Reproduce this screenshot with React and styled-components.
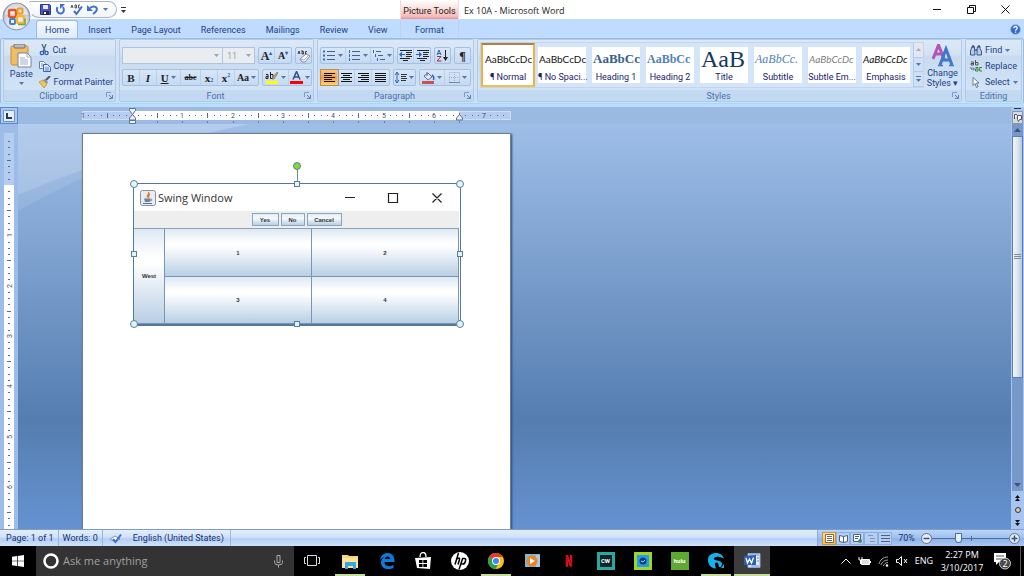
import React from 'react';
import styled, {createGlobalStyle, css} from "styled-components";
import {SiNetflix} from "react-icons/si";

const GlobalStyle = createGlobalStyle`
  * {
    box-sizing: border-box;
  }

  html, body, #root {
    height: 100%;
  }

  body {
    margin: 0;
    overflow: hidden;
    font-family: Roboto, "Open Sans", sans-serif;
    font-size: 9px;
    line-height: 12px;
    color: #1c3f88;
  }

  button, input, select {
    font: inherit;
    color: inherit;
    margin: 0;
    padding: 0;
    border: 0;
    background: none;
  }

  svg {
    display: block;
    flex: none;
  }
`

const Window = styled.div`
  height: 100vh;
  display: flex;
  flex-direction: column;
  background: #bfdbff;
`

/* ---------- title bar ---------- */

const TitleBar = styled.header`
  position: relative;
  display: flex;
  height: 19px;
  background: #fff;
  color: #222;
`

const OrbButton = styled.button`
  position: absolute;
  left: 2px;
  top: 2px;
  z-index: 2;
  width: 29px;
  height: 29px;
`

const TitleLeft = styled.div`
  flex: none;
  width: 400px;
  padding: 1px 0 0 28px;
  display: flex;
  align-items: flex-start;
`

const QuickAccess = styled.div`
  display: flex;
  align-items: center;
  justify-content: space-between;
  width: 89px;
  height: 17px;
  padding: 0 8px 0 11px;
  border: 1px solid #a9b4c4;
  border-left-color: #fff;
  border-radius: 3px 9px 9px 12px;
  background: linear-gradient(#fff, #f1f4f9);
`

const PlainButton = styled.button`
  display: flex;
  align-items: center;
  justify-content: center;
  min-width: ${p => p.$w || 10}px;
  height: ${p => p.$h || 15}px;
`

const PictureTools = styled.div`
  flex: none;
  width: 59px;
  padding-top: 5px;
  text-align: center;
  white-space: nowrap;
  background: linear-gradient(#fff, #fbe4e2 40%, #f5b9b5 88%, #e98f8c);
  border-left: 1px solid #f3dcdc;
  border-right: 1px solid #f3dcdc;
`

const Caption = styled.h1`
  flex: 1;
  margin: 0;
  padding: 5px 0 0 5px;
  font-family: "Open Sans", sans-serif;
  font-size: 9px;
  font-weight: 400;
`

const WindowButtons = styled.div`
  display: flex;
  padding-right: 2px;
`

/* ---------- tabs ---------- */

const TabRow = styled.nav`
  display: flex;
  align-items: flex-end;
  height: 19px;
  padding-right: 3px;
`

const TabList = styled.div`
  flex: none;
  width: 400px;
  padding-left: 36px;
  display: flex;
`

const Tab = styled.button`
  height: 18px;
  padding: 0 ${p => p.$active ? 8 : 9}px;
  white-space: nowrap;
  border: 1px solid transparent;
  border-bottom: 0;

  ${p => p.$active && css`
    background: linear-gradient(#f6faff, #dfebf8);
    border-color: #9dbbe0;
    border-radius: 3px 3px 0 0;
  `}
  ${p => p.$context && css`
    width: 59px;
    border-color: transparent #c6cfe6;
  `}
`

const TabFill = styled.div`
  flex: 1;
`

/* ---------- ribbon ---------- */

const Ribbon = styled.section`
  display: grid;
  grid-template-columns: 113px 195px 157px 1fr 57px;
  grid-template-rows: minmax(0, 1fr);
  gap: 3px;
  flex: none;
  height: 66px;
  padding: 0 1px 1px 2px;
  background: linear-gradient(#d5e4f5, #cbdff5);
  border: 1px solid #9cbce0;
  border-bottom-color: #9ce0f0;
  border-radius: 3px;
`

const Group = styled.div`
  display: flex;
  flex-direction: column;
  min-width: 0;
  border: 1px solid #b0cbe9;
  border-radius: 2px;
  background: linear-gradient(#dce8f6, #d2e2f4 25%, #c7daef 26%, #d5e6f8);
`

const GroupBody = styled.div`
  flex: 1;
  display: flex;
  min-height: 0;
  padding: ${p => p.$pad || "2px 2px 0 2px"};
`

const GroupLabel = styled.div`
  display: flex;
  align-items: center;
  flex: none;
  height: 11px;
  background: #c2d9f1;
  color: #4a70ad;

  span {
    flex: 1;
    text-align: center;
    padding-left: ${p => p.$bare ? 0 : 7}px;
  }
`

const Launcher = styled.button`
  width: 9px;
  height: 9px;
`

const BigButton = styled.button`
  display: flex;
  flex-direction: column;
  align-items: center;
  width: ${p => p.$w}px;
  padding-top: 2px;
  line-height: 10px;

  svg + span {
    margin-top: 1px;
  }

  span + svg {
    margin-top: 3px;
  }
`

const Lines = styled.div`
  display: flex;
  flex-direction: column;
`

const LineButton = styled.button`
  display: flex;
  align-items: center;
  gap: 3px;
  height: 16px;
  padding-left: 2px;
  white-space: nowrap;
`

const Rows = styled.div`
  display: flex;
  flex-direction: column;
  gap: 5px;
  width: 100%;
`

const Row = styled.div`
  display: flex;
  gap: 3px;
  height: 17px;
`

const ButtonSet = styled.div`
  display: flex;
  align-items: stretch;
  flex: none;
  border: 1px solid #a4c0e2;
  border-radius: 2px;
  background: linear-gradient(#d8e6f7, #c5daf2);
`

const Tool = styled.button`
  display: flex;
  align-items: center;
  justify-content: center;
  flex: none;
  width: ${p => p.$w || 17}px;
  color: #222;
  font-family: "Liberation Serif", serif;
  font-size: ${p => p.$size || 11}px;
  font-weight: 700;
  border-right: 1px solid #b9d0ec;

  &:last-child {
    border-right: 0;
  }

  svg + svg, span + svg {
    margin-left: 2px;
  }

  sub, sup {
    font-size: 6px;
    line-height: 6px;
    color: #2a5fb5;
  }

  sub {
    align-self: flex-end;
    padding-bottom: 2px;
  }

  sup {
    align-self: flex-start;
    padding-top: 2px;
  }

  ${p => p.$on && css`
    background: linear-gradient(#fbc67c, #fd9b3b 50%, #ffd36b);
    outline: 1px solid #b5905a;
  `}
`

const ComboPair = styled.div`
  display: flex;
  flex: none;
`

const Combo = styled.label`
  position: relative;
  display: flex;
  width: ${p => p.$w}px;
  border: 1px solid #b4c4d8;
  background: #e9edf1;
  color: #9aa3ae;

  & + & {
    border-left: 0;
  }

  select {
    appearance: none;
    width: 100%;
    padding-left: 4px;
    opacity: 1;
  }

  svg {
    position: absolute;
    right: 3px;
    top: 6px;
  }
`

const Gallery = styled.div`
  flex: 1;
  display: flex;
  min-width: 0;
  height: 46px;
  overflow: hidden;
  border: 1px solid #c0d5ee;
  background: #d4e5f9;
`

const StyleTile = styled.button`
  flex: none;
  width: 54px;
  height: 44px;
  padding: 2px 1px;
  border: 2px solid transparent;
  color: #20206a;
  ${p => p.$on && css`
    border-color: #b08040 #f0b040 #f5c04a;
    background: #fff;
  `}
`

const TileFace = styled.span`
  display: flex;
  flex-direction: column;
  width: 48px;
  height: 36px;
  background: #fff;
  white-space: nowrap;
  text-align: center;
`

const Sample = styled.span`
  display: block;
  height: 24px;
  line-height: 24px;
  padding-left: 1px;
  overflow: hidden;
  text-align: left;
  font-family: ${p => p.$serif ? '"Liberation Serif", serif' : 'Lato, sans-serif'};
  font-size: ${p => p.$size || 10}px;
  font-weight: ${p => p.$bold ? 700 : 400};
  font-style: ${p => p.$italic ? "italic" : "normal"};
  color: ${p => p.$color || "#111"};
`

const GalleryScroll = styled.div`
  display: grid;
  grid-template-rows: repeat(3, 1fr);
  width: 11px;
  margin-left: auto;
  border-left: 1px solid #b3cbe8;

  button {
    display: flex;
    align-items: center;
    justify-content: center;
    border-bottom: 1px solid #b3cbe8;
    background: #cfe0f5;
  }

  button:first-child {
    background: #e4e8ee;
  }
`

/* ---------- document area ---------- */

const Work = styled.main`
  flex: 1;
  display: flex;
  min-height: 0;
  margin-top: 3px;
  background: #9bbae1;
`

const WorkMain = styled.div`
  flex: 1;
  display: flex;
  flex-direction: column;
  min-width: 0;
`

const RulerRow = styled.div`
  display: flex;
  height: 17px;
`

const TabStop = styled.button`
  display: flex;
  align-items: center;
  justify-content: center;
  width: 18px;
  margin-right: 62px;
  border: 1px solid #5c88cc;
  background: #a9c6ef;
`

const DocRow = styled.div`
  flex: 1;
  display: flex;
  min-height: 0;
`

const SideRuler = styled.div`
  display: flex;
  width: 18px;
  padding: 9px 4px 0 4px;
  overflow: hidden;
  background: #9dbde8;
`

const SideScale = styled.div`
  background: #fff;
`

const Canvas = styled.div`
  position: relative;
  flex: 1;
  display: flex;
  padding: 9px 0 0 64px;
  overflow: hidden;
  background: linear-gradient(#9ebee8, #557db0 73%, #6592d0);
`

const Swoosh = styled.svg`
  position: absolute;
  left: 0;
  top: 0;
`

const Page = styled.article`
  position: relative;
  width: 429px;
  padding: 49px 49px 0 50px;
  background: #fff;
  border: 1px solid #6d7d96;
  border-bottom: 0;
  box-shadow: 1px 1px 2px #2f4a74;
`

const Picture = styled.figure`
  position: relative;
  margin: 0;
  border: 1px solid #54799f;
  border-width: 1px 1px 2px 1px;
  padding-right: 1px;
  font-family: "Liberation Sans", sans-serif;
  color: #333;
`

const Handle = styled.i`
  position: absolute;
  left: ${p => p.$x};
  top: ${p => p.$y};
  width: ${p => p.$round ? 8 : 6}px;
  height: ${p => p.$round ? 8 : 6}px;
  transform: translate(-50%, -50%);
  border: 1px solid #5c7f99;
  border-radius: ${p => p.$round ? "50%" : "0"};
  background: ${p => p.$green ? "#7fdc2c" : "#dff5f8"};
`

const RotateStem = styled.i`
  position: absolute;
  left: 50%;
  top: -18px;
  width: 1px;
  height: 18px;
  background: #6a8db0;
`

const SwingTitle = styled.div`
  display: flex;
  align-items: center;
  height: 27px;
  padding: 0 0 0 6px;
  gap: 2px;
  font-family: "Open Sans", sans-serif;
  font-size: 11px;
  line-height: 16px;

  span {
    flex: 1;
  }
`

const SwingBar = styled.div`
  display: flex;
  justify-content: center;
  gap: 2px;
  height: 17px;
  padding: 2px 0;
  background: #eee;
`

const swingFace = css`
  font-weight: 700;
  font-size: 6px;
  line-height: 8px;
  border: 1px solid #7b95b0;
  background: linear-gradient(#dde8f3, #fff 30%, #fff 36%, #b8cfe5);
`

const SwingButton = styled.button`
  ${swingFace};
  width: ${p => p.$w}px;
  height: 13px;
  background: linear-gradient(#e3ecf5, #f5f9fc 40%, #b8cfe5);
  border-color: #8ba3bb;
`

const SwingBody = styled.div`
  display: grid;
  grid-template-columns: 31px 1fr 1fr;
  grid-template-rows: 48px 47px;
  border-top: 1px solid #8ba0b4;
`

const SwingCell = styled.button`
  ${swingFace};
  border-width: 0 1px 1px 0;
  grid-row: ${p => p.$tall ? "span 2" : "auto"};
`

const ScrollColumn = styled.div`
  display: flex;
  flex-direction: column;
  align-items: center;
  width: 13px;
  background: #a8c5f2;
`

const SplitBar = styled.div`
  width: 7px;
  height: 1px;
  margin: 1px 0 2px;
  background: #25365a;
`

const ScrollTrack = styled.div`
  flex: 1;
  display: flex;
  flex-direction: column;
  align-items: center;
  width: 11px;
  background: #7799ca;
`

const ScrollThumb = styled.div`
  display: flex;
  align-items: center;
  justify-content: center;
  height: 66%;
  width: 11px;
  margin-bottom: auto;
  border: 1px solid #5d7fb0;
  background: linear-gradient(90deg, #f1f5f9, #dce5ee 50%, #b6c8dc);
`

/* ---------- status bar ---------- */

const StatusBar = styled.footer`
  display: flex;
  flex: none;
  height: 17px;
  color: #15306c;
  border-top: 1px solid #7e9cc4;
  background: linear-gradient(#e3eefc, #cfe1fa 45%, #b3cff5 55%, #cfe2fb);
`

const StatusItem = styled.div`
  display: flex;
  align-items: center;
  padding: 0 ${p => p.$tight ? 4 : 6}px;
  gap: 11px;
  border-right: 1px solid #9ab6dd;

  &:first-child {
    padding-right: 4px;
  }
`

const StatusRight = styled.div`
  display: flex;
  align-items: center;
  margin-left: auto;
  padding: 0 4px;
  border-left: 1px solid #8aa9d5;
  background: linear-gradient(#bcd5f8, #9dbfee 50%, #8db3e8 55%, #a9c9f3);
`

const ViewButton = styled.button`
  display: flex;
  align-items: center;
  justify-content: center;
  width: 14px;
  height: 13px;
  border: 1px solid ${p => p.$on ? "#c9953c" : "#8dafe0"};
  background: ${p => p.$on ? "linear-gradient(#ffdf9a, #fdb750)" : "#b4cff3"};
`

const ZoomValue = styled.button`
  width: 29px;
`

const ZoomSlider = styled.input`
  appearance: none;
  width: 77px;
  height: 12px;
  background: linear-gradient(#4d6b9c, #4d6b9c) 0 6px / 100% 1px no-repeat,
  linear-gradient(#4d6b9c, #4d6b9c) 39px 4px / 1px 5px no-repeat;

  &::-webkit-slider-thumb {
    appearance: none;
    width: 7px;
    height: 10px;
    border: 1px solid #4d6b9c;
    border-radius: 1px 1px 4px 4px;
    background: #e8f0fb;
  }
`

/* ---------- taskbar ---------- */

const Taskbar = styled.footer`
  display: flex;
  flex: none;
  align-items: stretch;
  height: 30px;
  background: #000;
  color: #fff;
`

const StartButton = styled.button`
  display: flex;
  align-items: center;
  justify-content: center;
  width: 36px;
`

const SearchBox = styled.label`
  display: flex;
  align-items: center;
  gap: 4px;
  width: 258px;
  padding: 0 10px 0 7px;
  background: #333;

  input {
    flex: 1;
    min-width: 0;
    height: 18px;
    font-family: "Open Sans", sans-serif;
    font-size: 11px;
    line-height: 18px;
    outline: 0;
  }

  input::placeholder {
    color: #a0a0a0;
    opacity: 1;
  }
`

const AppButton = styled.button`
  display: flex;
  align-items: center;
  justify-content: center;
  width: ${p => p.$w || 37}px;
  background: ${p => p.$active ? "#3c3c3c" : "none"};
  border-bottom: 2px solid ${p => p.$open ? "#c5dd9c" : "transparent"};
  border-top: 2px solid transparent;
  margin: 0 ${p => p.$open && !p.$active ? 3 : 0}px;
`

const Apps = styled.div`
  display: flex;
  padding-left: 3px;
`

const SquareLogo = styled.span`
  display: flex;
  align-items: center;
  justify-content: center;
  width: 18px;
  height: 18px;
  background: ${p => p.$bg};
  border: ${p => p.$border || "0"};
  color: #fff;
  font-size: 6px;
  line-height: 8px;
  font-weight: 700;
`

const Tray = styled.div`
  display: flex;
  align-items: center;
  gap: 7px;
  margin-left: auto;
  padding-right: 3px;
  font-family: "Open Sans", sans-serif;
`

const Clock = styled.div`
  width: 44px;
  margin-right: 2px;
  text-align: center;
  line-height: 13px;
`

const ShowDesktop = styled.button`
  width: 1px;
  height: 30px;
  background: #555;
`

/* ---------- icons ---------- */

const Svg = ({w = 12, h = 12, vb, children}) => (
    <svg width={w} height={h} viewBox={vb || `0 0 ${w} ${h}`} fill="none" aria-hidden="true">{children}</svg>
)

const Caret = ({color = "#5578ab"}) => (
    <Svg w={5} h={3}><path d="M0 0h5L2.5 3z" fill={color}/></Svg>
)

const Orb = () => (
    <Svg w={29} h={29}>
        <defs>
            <radialGradient id="orb" cx=".5" cy=".75" r=".8">
                <stop offset="0" stopColor="#fff"/>
                <stop offset=".5" stopColor="#d5dae2"/>
                <stop offset="1" stopColor="#7f8ea6"/>
            </radialGradient>
        </defs>
        <circle cx="14.5" cy="14.5" r="13.5" fill="url(#orb)" stroke="#8795ab"/>
        <path d="M3 13a11.500 11.500 0 0 1 23 0q-11-4-23 0z" fill="#fff" opacity=".6"/>
        <rect x="7" y="8" width="7" height="7" rx="1.500" stroke="#e4572a" strokeWidth="2.400"/>
        <rect x="15.500" y="6.500" width="5" height="5" rx="1" stroke="#f39a1d" strokeWidth="2"/>
        <rect x="8" y="17" width="5" height="5" rx="1" stroke="#3f81cf" strokeWidth="2"/>
        <rect x="15" y="14" width="7" height="7" rx="1.500" stroke="#f6b62a" strokeWidth="2.400"/>
        <path d="M16 22.500h7v-6" stroke="#6aa84f" strokeWidth="1.500"/>
    </Svg>
)

const SaveIcon = () => (
    <Svg w={11} h={11}>
        <path d="M.5.500h9l1 1v9H.5z" fill="#4d55c4" stroke="#2d3592"/>
        <path d="M3 1h5v4H3z" fill="#e8ecfa"/>
        <path d="M3 7h6v4H3z" fill="#1f2760"/>
        <path d="M4 8h2v2H4z" fill="#fff"/>
    </Svg>
)

const RedoIcon = () => (
    <Svg w={11} h={11}>
        <path d="M2.500 3C.8 6 2.500 9.500 5.500 9.500S10 6 8 3" stroke="#3c6fd0" strokeWidth="2"/>
        <path d="M5 5V0h5z" fill="#3c6fd0"/>
    </Svg>
)

const SpellIcon = ({flat}) => (
    <Svg w={13} h={12}>
        {flat
            ? <path d="M1 7l5-3 5 3-5 3z" fill="#fff" stroke="#7f92b2"/>
            : <path d="M1 4l1-3 1 3M5 1v3h1.500V1zM10 1H8.500v3H10" stroke="#333" strokeWidth=".8"/>}
        <path d="M4 7l2.500 3L12 2.500" stroke="#3c6fd0" strokeWidth="2"/>
    </Svg>
)

const UndoIcon = () => (
    <Svg w={12} h={11}>
        <path d="M3 4c4-3 8-1 6.500 2.500C9 8 7.500 9 6 10" stroke="#3c6fd0" strokeWidth="2"/>
        <path d="M0 1v6h6z" fill="#3c6fd0"/>
    </Svg>
)

const HelpIcon = () => (
    <Svg w={11} h={11}>
        <circle cx="5.500" cy="5.500" r="5" fill="#2f6bd0" stroke="#a9bcd8"/>
        <path d="M3.800 4.300c0-2.500 3.500-2.200 3.500-.2 0 1.200-1.700 1.200-1.700 2.600M5.600 7.600v1.200" stroke="#fff" strokeWidth="1.300"/>
    </Svg>
)

const PasteIcon = () => (
    <Svg w={22} h={24}>
        <rect x="1" y="2" width="17" height="19" rx="1.500" fill="#f1bd62" stroke="#c98c35"/>
        <rect x="4" y="0" width="11" height="4" rx="1" fill="#b9bcc4" stroke="#77716a"/>
        <path d="M8 9h9l4 4v10H8z" fill="#fff" stroke="#7184aa"/>
        <path d="M17 9v4h4M10 14h5M10 16h8M10 18h8M10 20h8" stroke="#9fb0cf"/>
    </Svg>
)

const CutIcon = () => (
    <Svg w={11} h={12}>
        <path d="M3 0l3.500 8M7 0L4 8" stroke="#52647f" strokeWidth="1.300"/>
        <circle cx="3" cy="9" r="1.700" stroke="#2f62b8" strokeWidth="1.300"/>
        <circle cx="7.500" cy="9" r="1.700" stroke="#2f62b8" strokeWidth="1.300"/>
    </Svg>
)

const CopyIcon = () => (
    <Svg w={12} h={11}>
        <path d="M.5.500h4l2 2v5h-6z" fill="#fff" stroke="#5a7fc0"/>
        <path d="M4.500 3.500h4l3 3v4h-7z" fill="#d9e7fb" stroke="#3d62b0"/>
        <path d="M6 7h4M6 9h4M2 3h2M2 5h2" stroke="#5a7fc0"/>
    </Svg>
)

const BrushIcon = () => (
    <Svg w={12} h={12}>
        <path d="M0 6l4-2 4 4-3 4z" fill="#f0c557" stroke="#b28a2a" strokeWidth=".7"/>
        <path d="M4 4l2-1 3 3-1 2z" fill="#8b93a5"/>
        <path d="M7 4l4-4" stroke="#4d5a76" strokeWidth="2"/>
    </Svg>
)

const LauncherIcon = () => (
    <Svg w={7} h={7}>
        <path d="M.5 5V.500H5" stroke="#7f9cc6"/>
        <path d="M3 3l3 3M6.500 3v3.500H3" stroke="#5f7fae"/>
    </Svg>
)

const EraserIcon = () => (
    <Svg w={14} h={14}>
        <path d="M1 5l1-3 1 3M5 1v4h1.500V2.500H5M10 2.500H8.500V5H10" stroke="#333" strokeWidth=".9"/>
        <path d="M3 10l6-5 4 2-5 6H5z" fill="#fff" stroke="#7a87a5"/>
        <path d="M3 10l4 1 5-5" stroke="#9aa5bf"/>
    </Svg>
)

// bullets / numbering / multilevel share the same three lines
const ListIcon = ({kind}) => (
    <Svg w={13} h={12}>
        {[1.500, 5.500, 9.500].map((y, i) => {
            const dx = kind === "multi" ? i * 2 : 0;
            return (
                <g key={y}>
                    {kind === "bullet"
                        ? <rect x="0" y={y - 1} width="2" height="2" fill="#3d68b8"/>
                        : <path d={`M${1.500 + dx} ${y - 1.500}v3`} stroke="#3d68b8"/>}
                    <path d={`M${4 + dx} ${y}h${kind === "multi" ? 5 : 8}`} stroke="#41618f"/>
                </g>
            )
        })}
    </Svg>
)

const IndentIcon = ({out}) => (
    <Svg w={13} h={11}>
        <path d="M1 .5h12M7 2.500h6M7 4.500h5M7 6.500h6M1 8.500h10M4 10.500h5" stroke="#222"/>
        <path d={out ? "M0 4.500l3-3v6zM3 4h3v1H3z" : "M6 4.500l-3-3v6zM0 4h3v1H0z"} fill="#2f62b8"/>
    </Svg>
)

const SortIcon = () => (
    <Svg w={13} h={13}>
        <path d="M1 6l2-5 2 5M1.500 4.500h3" stroke="#2f62b8"/>
        <path d="M1 7.500h4L1 12h4.500" stroke="#a1304a"/>
        <path d="M9.500 1v9" stroke="#222"/>
        <path d="M7 8h5l-2.500 4z" fill="#222"/>
    </Svg>
)

const alignWidths = {
    left: [[0, 11], [0, 8], [0, 11], [0, 8], [0, 11]],
    center: [[0, 11], [2, 7], [0, 11], [2, 7], [0, 11]],
    right: [[0, 11], [3, 8], [0, 11], [3, 8], [0, 11]],
    justify: [[0, 11], [0, 11], [0, 11], [0, 11], [0, 11]],
}

const AlignIcon = ({kind}) => (
    <Svg w={11} h={9}>
        <path d={alignWidths[kind].map(([x, w], i) => `M${x} ${i * 2 + .5}h${w}`).join("")} stroke="#111"/>
    </Svg>
)

const SpacingIcon = () => (
    <Svg w={12} h={13}>
        <path d="M2 2v9M0 4l2-3 2 3M0 9l2 3 2-3" stroke="#2f62b8"/>
        <path d="M6 3.500h6M6 5.500h5M6 7.500h6M6 9.500h5" stroke="#333"/>
    </Svg>
)

const BucketIcon = () => (
    <Svg w={13} h={13}>
        <path d="M2 5l4-3 4 4-4 3z" fill="#dfe8f6" stroke="#5b6f94"/>
        <path d="M5 5V1" stroke="#5b6f94"/>
        <path d="M10 4c2 1 2 3 1.500 5" stroke="#2f62b8" strokeWidth="1.500"/>
        <path d="M0 10h12v3H0z" fill="#c8504f"/>
    </Svg>
)

const BorderIcon = () => (
    <Svg w={11} h={11}>
        <path d="M.5.500h10v10H.5zM5.500 0v10M0 5.500h10" stroke="#9fb0ca" strokeDasharray="1 1"/>
        <path d="M0 10.500h11" stroke="#7388aa"/>
    </Svg>
)

const HighlightIcon = () => (
    <Svg w={14} h={13}>
        <path d="M1 3.500h2v4H1v-2h2M5.500 1v6.500H8v-4H5.500" stroke="#222"/>
        <path d="M7 8l5-7 1 1-4 6z" fill="#d5b34a" stroke="#6b6f7d" strokeWidth=".7"/>
        <path d="M1 10h12v3H1z" fill="#ff0"/>
    </Svg>
)

const ChangeStylesIcon = () => (
    <Svg w={22} h={23}>
        <path d="M1 15L6.500 1 12 15M3 10h7" stroke="#b455b4" strokeWidth="3"/>
        <path d="M8 21l6-16 6 16M10 16h8" stroke="#3f78c8" strokeWidth="3"/>
        <path d="M6 21.500h5M17 21.500h5" stroke="#3f78c8" strokeWidth="1.500"/>
    </Svg>
)

const FindIcon = () => (
    <Svg w={12} h={11}>
        <path d="M2 1.500h2.500v3L5 10H.5V6zM7.500 1.500H10V4l1.500 2v4H7V4.500z" fill="#b9cbe6" stroke="#3a5890"/>
        <path d="M4.500 5h3M3 0v3M9 0v3" stroke="#3a5890" strokeWidth="1.500"/>
    </Svg>
)

const ReplaceIcon = () => (
    <Svg w={12} h={12}>
        <path d="M1 2h2.500v3H1V3.500h2M5.500 0v5H8V2.500H5.500" stroke="#555"/>
        <path d="M1 7v2h3M3 7.500L4.500 9 3 10.500" stroke="#3a5890" strokeWidth=".8"/>
        <path d="M5.500 7.500H8V11H5.500V9h2M12 7.500H9.700V11H12" stroke="#2e8b3a"/>
    </Svg>
)

const CursorIcon = () => (
    <Svg w={12} h={11}>
        <path d="M3 .5v8l2-2 1.500 4 1.500-.7L6.500 6H9z" fill="#fff" stroke="#4d5e80" strokeWidth=".8"/>
    </Svg>
)

const JavaIcon = () => (
    <Svg w={16} h={16}>
        <rect x=".5" y=".5" width="15" height="15" rx="2" fill="#e9edf1" stroke="#8293a4"/>
        <path d="M8.500 2C10 4 6 5 7.500 7.500M10 4C8 5.500 9 6 8.500 8" stroke="#e8742c" strokeWidth="1.300"/>
        <path d="M4 8.500h6.500l-1 3.500H5z" fill="#6d8397"/>
        <path d="M10.500 9c2 0 1.500 2-.5 2M3 13.500h9" stroke="#5a7187"/>
    </Svg>
)

const RoundSign = ({plus}) => (
    <Svg w={11} h={11}>
        <circle cx="5.500" cy="5.500" r="5" fill="#e4edf9" stroke="#5f7193"/>
        <path d={plus ? "M2.500 5.500h6M5.500 2.500v6" : "M2.500 5.500h6"} stroke="#3d4f75" strokeWidth="1.500"/>
    </Svg>
)

/* tick positions are computed, one inch is a bit over 50px at 70% zoom */
const INCH = 50.3;

const ticks = (zero, from, to) => {
    const out = [];
    for (let i = Math.ceil((from - zero) / INCH * 8); zero + i * INCH / 8 < to; i++) {
        out.push({i, pos: Math.round(zero + i * INCH / 8)});
    }
    return out;
}

const HorizontalRuler = () => (
    <Svg w={434} h={17}>
        <path d="M2.500 4.500h428v8h-428z" fill="#b4cdf0" stroke="#cfe0f6"/>
        <path d="M52 4h327v9H52z" fill="#fff"/>
        <text x="3" y="11" fontSize="7" textAnchor="middle" fill="#44506a">1</text>
        {ticks(52, 5, 428).map(({i, pos}) => {
            if (i % 8 === 0) {
                return i !== 0 &&
                    <text key={i} x={pos} y="11" fontSize="7" textAnchor="middle" fill="#44506a">{i / 8}</text>
            }
            return <path key={i} d={i % 4 === 0 ? `M${pos + .5} 6v5` : `M${pos + .5} 8v1`} stroke="#5e6b86"/>
        })}
        {ticks(52, 60, 380).filter(t => t.i % 4 === 0).map(({i, pos}) => (
            <path key={i} d={`M${pos + .5} 14v2`} stroke="#6b7fa4"/>
        ))}
        <path d="M49.500 1.500h6v2l-3 4-3-4zM49.500 13v-2l3-3.500 3 3.500v2zM49.500 13.500h6v3h-6z" fill="#e9f0fa" stroke="#5f7396"/>
        <path d="M376.500 13v-2l3-3.500 3 3.500v2z" fill="#e9f0fa" stroke="#5f7396"/>
    </Svg>
)

const VerticalRuler = () => (
    <Svg w={10} h={396}>
        <path d="M0 0h10v52H0z" fill="#b4cdf0"/>
        {ticks(52, 4, 394).map(({i, pos}) => {
            if (i % 8 === 0) {
                return i !== 0 && (
                    <text key={i} x="0" y="0" transform={`translate(8 ${pos}) rotate(-90)`} fontSize="7"
                          textAnchor="middle" fill="#44506a">{Math.abs(i / 8)}</text>
                )
            }
            return <path key={i} d={i % 4 === 0 ? `M3 ${pos + .5}h4` : `M4 ${pos + .5}h2`} stroke="#5e6b86"/>
        })}
    </Svg>
)

/* ---------- data ---------- */

const tabs = ["Home", "Insert", "Page Layout", "References", "Mailings", "Review", "View"]

const textStyles = [
    {name: "¶ Normal", text: "AaBbCcDc"},
    {name: "¶ No Spaci...", text: "AaBbCcDc"},
    {name: "Heading 1", text: "AaBbCc", serif: true, bold: true, size: 13, color: "#365f91"},
    {name: "Heading 2", text: "AaBbCc", serif: true, bold: true, size: 12, color: "#4f81bd"},
    {name: "Title", text: "AaB", serif: true, size: 24, color: "#17365d"},
    {name: "Subtitle", text: "AaBbCc.", serif: true, italic: true, size: 12, color: "#4f81bd"},
    {name: "Subtle Em...", text: "AaBbCcDc", italic: true, color: "#808080"},
    {name: "Emphasis", text: "AaBbCcDc", italic: true},
]

const Label = ({children, bare}) => (
    <GroupLabel $bare={bare}>
        <span>{children}</span>
        {!bare && <Launcher aria-label={`${children} options`}><LauncherIcon/></Launcher>}
    </GroupLabel>
)

const TitleArea = () => (
    <>
        <TitleBar>
            <OrbButton aria-label="Office Button"><Orb/></OrbButton>
            <TitleLeft>
                <QuickAccess>
                    <PlainButton aria-label="Save"><SaveIcon/></PlainButton>
                    <PlainButton aria-label="Repeat"><RedoIcon/></PlainButton>
                    <PlainButton aria-label="Spelling"><SpellIcon/></PlainButton>
                    <PlainButton aria-label="Undo"><UndoIcon/></PlainButton>
                    <PlainButton $w={5} aria-label="Undo list"><Caret/></PlainButton>
                </QuickAccess>
                <PlainButton $w={13} $h={17} aria-label="Customize">
                    <Svg w={5} h={6}><path d="M0 .5h5" stroke="#333"/><path d="M0 3h5L2.500 6z" fill="#333"/></Svg>
                </PlainButton>
            </TitleLeft>
            <PictureTools>Picture Tools</PictureTools>
            <Caption>Ex 10A - Microsoft Word</Caption>
            <WindowButtons>
                <PlainButton $w={34} $h={19} aria-label="Minimize">
                    <Svg w={9} h={9}><path d="M0 4.500h8" stroke="#111"/></Svg>
                </PlainButton>
                <PlainButton $w={34} $h={19} aria-label="Restore">
                    <Svg w={9} h={9}><path d="M.5 2.500h6v6h-6zM2.500 2V.500h6v6H7" stroke="#111"/></Svg>
                </PlainButton>
                <PlainButton $w={34} $h={19} aria-label="Close">
                    <Svg w={9} h={9}><path d="M.5.500l8 8M8.500.500l-8 8" stroke="#111"/></Svg>
                </PlainButton>
            </WindowButtons>
        </TitleBar>
        <TabRow>
            <TabList>
                {tabs.map((t, i) => <Tab key={t} $active={i === 0}>{t}</Tab>)}
            </TabList>
            <Tab $context>Format</Tab>
            <TabFill/>
            <PlainButton $w={11} $h={18} aria-label="Help"><HelpIcon/></PlainButton>
        </TabRow>
    </>
)

const RibbonArea = () => (
    <Ribbon>
        <Group>
            <GroupBody>
                <BigButton $w={33}><PasteIcon/><span>Paste</span><Caret/></BigButton>
                <Lines>
                    <LineButton><CutIcon/>Cut</LineButton>
                    <LineButton><CopyIcon/>Copy</LineButton>
                    <LineButton><BrushIcon/>Format Painter</LineButton>
                </Lines>
            </GroupBody>
            <Label>Clipboard</Label>
        </Group>
        <Group>
            <GroupBody $pad="7px 1px 0 2px">
                <Rows>
                    <Row>
                        <ComboPair>
                            <Combo $w={101}>
                                <select aria-label="Font" disabled defaultValue="">
                                    <option value=""/>
                                </select>
                                <Caret color="#9aa3ae"/>
                            </Combo>
                            <Combo $w={32}>
                                <select aria-label="Font size" disabled>
                                    <option>11</option>
                                </select>
                                <Caret color="#9aa3ae"/>
                            </Combo>
                        </ComboPair>
                        <ButtonSet>
                            <Tool $w={16} $size={12} aria-label="Grow font">A<sup>▴</sup></Tool>
                            <Tool $w={16} $size={10} aria-label="Shrink font">A<sup>▾</sup></Tool>
                        </ButtonSet>
                        <ButtonSet><Tool $w={15} aria-label="Clear formatting"><EraserIcon/></Tool></ButtonSet>
                    </Row>
                    <Row>
                        <ButtonSet>
                            <Tool>B</Tool>
                            <Tool><i>I</i></Tool>
                            <Tool $w={24}><u>U</u>&nbsp;<Caret/></Tool>
                            <Tool $w={20} $size={8}><s>abc</s></Tool>
                            <Tool>x<sub>2</sub></Tool>
                            <Tool>x<sup>2</sup></Tool>
                            <Tool $w={23} $size={10}><span>Aa</span><Caret/></Tool>
                        </ButtonSet>
                        <ButtonSet>
                            <Tool $w={26} aria-label="Highlight"><HighlightIcon/><Caret/></Tool>
                            <Tool $w={22} aria-label="Font color">
                                <Svg w={13} h={13}>
                                    <path d="M3 8.500L6.500.500l3.500 8M4.500 6h4" stroke="#2b4f8f" strokeWidth="1.500"/>
                                    <path d="M0 10h13v3H0z" fill="red"/>
                                </Svg>
                                <Caret/>
                            </Tool>
                        </ButtonSet>
                    </Row>
                </Rows>
            </GroupBody>
            <Label>Font</Label>
        </Group>
        <Group>
            <GroupBody $pad="7px 1px 0 2px">
                <Rows>
                    <Row>
                        <ButtonSet>
                            <Tool $w={25} aria-label="Bullets"><ListIcon kind="bullet"/><Caret/></Tool>
                            <Tool $w={25} aria-label="Numbering"><ListIcon kind="number"/><Caret/></Tool>
                            <Tool $w={22} aria-label="Multilevel list"><ListIcon kind="multi"/><Caret/></Tool>
                        </ButtonSet>
                        <ButtonSet>
                            <Tool $w={16} aria-label="Decrease indent"><IndentIcon out/></Tool>
                            <Tool $w={16} aria-label="Increase indent"><IndentIcon/></Tool>
                        </ButtonSet>
                        <ButtonSet><Tool $w={15} aria-label="Sort"><SortIcon/></Tool></ButtonSet>
                        <ButtonSet><Tool $w={15} $size={12}>¶</Tool></ButtonSet>
                    </Row>
                    <Row>
                        <ButtonSet>
                            {Object.keys(alignWidths).map((k, i) => (
                                <Tool key={k} $on={i === 0} aria-label={`Align ${k}`}><AlignIcon kind={k}/></Tool>
                            ))}
                        </ButtonSet>
                        <ButtonSet><Tool $w={21} aria-label="Line spacing"><SpacingIcon/><Caret/></Tool></ButtonSet>
                        <ButtonSet>
                            <Tool $w={25} aria-label="Shading"><BucketIcon/><Caret/></Tool>
                            <Tool $w={25} aria-label="Borders"><BorderIcon/><Caret/></Tool>
                        </ButtonSet>
                    </Row>
                </Rows>
            </GroupBody>
            <Label>Paragraph</Label>
        </Group>
        <Group>
            <GroupBody $pad="2px 0 0 2px">
                <Gallery>
                    {textStyles.map((s, i) => (
                        <StyleTile key={s.name} $on={i === 0}>
                            <TileFace>
                                <Sample $serif={s.serif} $bold={s.bold} $italic={s.italic} $size={s.size}
                                        $color={s.color}>{s.text}</Sample>
                                {s.name}
                            </TileFace>
                        </StyleTile>
                    ))}
                    <GalleryScroll>
                        <button aria-label="Row up"><Svg w={5} h={3}><path d="M0 3h5L2.500 0z" fill="#a5adb8"/></Svg></button>
                        <button aria-label="Row down"><Caret/></button>
                        <button aria-label="More">
                            <Svg w={5} h={6}><path d="M0 .5h5" stroke="#5578ab"/><path d="M0 3h5L2.500 6z" fill="#5578ab"/></Svg>
                        </button>
                    </GalleryScroll>
                </Gallery>
                <BigButton $w={37}>
                    <ChangeStylesIcon/>
                    <span>Change<br/>Styles ▾</span>
                </BigButton>
            </GroupBody>
            <Label>Styles</Label>
        </Group>
        <Group>
            <GroupBody>
                <Lines>
                    <LineButton><FindIcon/>Find <Caret/></LineButton>
                    <LineButton><ReplaceIcon/>Replace</LineButton>
                    <LineButton><CursorIcon/>Select <Caret/></LineButton>
                </Lines>
            </GroupBody>
            <Label bare>Editing</Label>
        </Group>
    </Ribbon>
)

const SwingPicture = () => (
    <Picture>
        <SwingTitle>
            <JavaIcon/>
            <span>Swing Window</span>
            <Svg w={115} h={12}>
                <path d="M1 5.500h10M44.500 1.500h9v9h-9zM88.500 1.500l9 9M97.500 1.500l-9 9" stroke="#222" strokeWidth="1.200"/>
            </Svg>
        </SwingTitle>
        <SwingBar>
            <SwingButton $w={27}>Yes</SwingButton>
            <SwingButton $w={24}>No</SwingButton>
            <SwingButton $w={35}>Cancel</SwingButton>
        </SwingBar>
        <SwingBody>
            <SwingCell $tall>West</SwingCell>
            {[1, 2, 3, 4].map(n => <SwingCell key={n}>{n}</SwingCell>)}
        </SwingBody>
        <RotateStem/>
        <Handle $x="50%" $y="-18px" $round $green/>
        {["0%", "100%"].map(x => ["0%", "100%"].map(y => <Handle key={x + y} $x={x} $y={y} $round/>))}
        <Handle $x="50%" $y="0%"/>
        <Handle $x="50%" $y="100%"/>
        <Handle $x="0%" $y="50%"/>
        <Handle $x="100%" $y="50%"/>
    </Picture>
)

const DocumentArea = () => (
    <Work>
        <WorkMain>
            <RulerRow>
                <TabStop aria-label="Tab stop">
                    <Svg w={12} h={12}>
                        <path d="M.5.500h11v11H.5z" fill="#e6eefa" stroke="#6d93d0"/>
                        <path d="M4 3v5h5" stroke="#26385e" strokeWidth="2"/>
                    </Svg>
                </TabStop>
                <HorizontalRuler/>
            </RulerRow>
            <DocRow>
                <SideRuler>
                    <SideScale><VerticalRuler/></SideScale>
                </SideRuler>
                <Canvas>
                    <Swoosh width="260" height="100" viewBox="0 0 260 100" aria-hidden="true">
                        <path d="M0 0H230Q100 28 0 71z" fill="#fff" opacity=".15"/>
                        <path d="M0 0H232Q110 24 0 87z" fill="#fff" opacity=".1"/>
                    </Swoosh>
                    <Page><SwingPicture/></Page>
                </Canvas>
            </DocRow>
        </WorkMain>
        <ScrollColumn>
            <SplitBar/>
            <PlainButton $w={11} $h={13} aria-label="View ruler">
                <Svg w={11} h={13}>
                    <path d="M.5.500h10v12H.5z" fill="#d5dae3" stroke="#8a93a5"/>
                    <path d="M2.500 8V3.500H5M5.500 4.500h4v4h-2l-1 2-1-2z" fill="#fff" stroke="#4d5668"/>
                </Svg>
            </PlainButton>
            <ScrollTrack>
                <PlainButton $h={12} aria-label="Scroll up">
                    <Svg w={7} h={4}><path d="M0 4h7L3.500 0z" fill="#3f5378"/></Svg>
                </PlainButton>
                <ScrollThumb>
                    <Svg w={7} h={6}><path d="M0 .5h7M0 2.500h7M0 4.500h7" stroke="#7c8b9c"/></Svg>
                </ScrollThumb>
                <PlainButton $h={12} aria-label="Scroll down">
                    <Svg w={7} h={4}><path d="M0 0h7L3.500 4z" fill="#3f5378"/></Svg>
                </PlainButton>
            </ScrollTrack>
            <PlainButton $h={13} aria-label="Previous page">
                <Svg w={5} h={6}><path d="M0 3h5L2.500 0zM0 6h5L2.500 3z" fill="#111"/></Svg>
            </PlainButton>
            <PlainButton $h={12} aria-label="Browse object">
                <Svg w={6} h={6}><circle cx="3" cy="3" r="2.500" fill="#d8cdb4" stroke="#333"/></Svg>
            </PlainButton>
            <PlainButton $h={13} aria-label="Next page">
                <Svg w={5} h={6}><path d="M0 0h5L2.500 3zM0 3h5L2.500 6z" fill="#111"/></Svg>
            </PlainButton>
        </ScrollColumn>
    </Work>
)

const Status = () => (
    <StatusBar>
        <StatusItem>Page: 1 of 1</StatusItem>
        <StatusItem $tight>Words: 0</StatusItem>
        <StatusItem><SpellIcon flat/>English (United States)</StatusItem>
        <StatusRight>
            <ViewButton $on aria-label="Print layout">
                <Svg w={9} h={9}><path d="M.5.500h8v8h-8z" fill="#fff" stroke="#8a6a3a"/><path d="M2 2.500h5M2 4.500h5M2 6.500h5" stroke="#666"/></Svg>
            </ViewButton>
            <ViewButton aria-label="Full screen reading">
                <Svg w={9} h={9}><path d="M.5 1.500l4 1 4-1v6l-4 1-4-1zM4.500 2.500v6" fill="#fff" stroke="#4d5e80"/></Svg>
            </ViewButton>
            <ViewButton aria-label="Web layout">
                <Svg w={9} h={9}><path d="M.5.500h7v7h-7z" fill="#fff" stroke="#4d5e80"/><path d="M2 2.500h4M2 4.500h3" stroke="#4d5e80"/><circle cx="7" cy="7" r="2" fill="#3b8f6a"/></Svg>
            </ViewButton>
            <ViewButton aria-label="Outline">
                <Svg w={9} h={9}><path d="M1 1.500h5M3 4.500h5M3 7.500h5" stroke="#8a93a5"/></Svg>
            </ViewButton>
            <ViewButton aria-label="Draft">
                <Svg w={9} h={9}><path d="M0 1.500h9M0 4.500h9M0 7.500h9" stroke="#4d5e80"/></Svg>
            </ViewButton>
            <ZoomValue>70%</ZoomValue>
            <PlainButton aria-label="Zoom out"><RoundSign/></PlainButton>
            <ZoomSlider type="range" aria-label="Zoom" min="0" max="100" defaultValue="33"/>
            <PlainButton aria-label="Zoom in"><RoundSign plus/></PlainButton>
        </StatusRight>
    </StatusBar>
)

const TaskbarArea = () => (
    <Taskbar>
        <StartButton aria-label="Start">
            <Svg w={12} h={12}>
                <path d="M0 1.700L5 1v4.700H0zM5.700.900L12 0v5.700H5.700zM0 6.300h5V11l-5-.7zM5.700 6.300H12V12l-6.300-.9z" fill="#fff"/>
            </Svg>
        </StartButton>
        <SearchBox>
            <Svg w={16} h={16}><circle cx="8" cy="8" r="6.500" stroke="#fff" strokeWidth="2.500"/></Svg>
            <input type="search" placeholder="Ask me anything" aria-label="Ask me anything"/>
            <Svg w={11} h={13}>
                <path d="M4 .5h3v7H4zM1.500 5.500v2q0 2.500 4 2.500t4-2.500v-2M5.500 10v2.500" stroke="#aaa"/>
            </Svg>
        </SearchBox>
        <AppButton $w={35} aria-label="Task view">
            <Svg w={16} h={12}><path d="M3.500.500h9v10h-9zM2 2.500H.5v6H2M14 2.500h1.500v6H14" stroke="#ddd"/></Svg>
        </AppButton>
        <Apps>
            <AppButton $w={30} $open aria-label="File Explorer">
                <Svg w={17} h={15}>
                    <path d="M0 1h6l1 1h9v12H0z" fill="#f7d67a"/>
                    <path d="M0 4h16v10H0z" fill="#fde49a"/>
                    <path d="M3 8h11v7h-3v-3H6v3H3z" fill="#35a7e0"/>
                </Svg>
            </AppButton>
            <AppButton aria-label="Edge">
                <Svg w={16} h={16}>
                    <path d="M1 7C2 1.500 6 0 8.500 0 13 0 15.500 3.500 15.500 7.500V9H5.500c0 5 5.500 5 9 3v3C9 17.500 2 16 2 9.500 2 7 3.500 5 5.500 4 3.500 4.500 2 5.500 1 7zm4.700-1h5.500c0-3.500-5-3.500-5.500 0z" fill="#0a7bdc"/>
                </Svg>
            </AppButton>
            <AppButton $w={36} aria-label="Store">
                <Svg w={16} h={18}>
                    <path d="M0 6l16-1-1 12-13-1z" fill="#fff"/>
                    <path d="M5 5c0-6 6-6 6 0" stroke="#fff" strokeWidth="1.300"/>
                    <path d="M4 8h3.500v3H4zM8.300 8H12v3H8.300zM4 12h3.500v3H4zM8.300 12H12v3H8.300z" fill="#000"/>
                </Svg>
            </AppButton>
            <AppButton aria-label="HP">
                <Svg w={18} h={18}>
                    <circle cx="9" cy="9" r="9" fill="#fff"/>
                    <path d="M7.500 1L4 12.500M5.500 7.500C8 5 9 6 8.400 8L7 12.500M11.800 6L8 17.500M11.500 6.500h2c1.300 0 1.300 1 1 2.500s-1 3-2.500 3H10.500" stroke="#000" strokeWidth="1.500"/>
                </Svg>
            </AppButton>
            <AppButton $w={30} $open aria-label="Chrome">
                <Svg w={16} h={16}>
                    <circle cx="8" cy="8" r="8" fill="#fbc116"/>
                    <path d="M8 8L1.100 4A8 8 0 0 1 15 4H8z" fill="#e33b2e"/>
                    <path d="M1.100 4A8 8 0 0 0 7.500 16L11 10 8 8z" fill="#2aa14c"/>
                    <circle cx="8" cy="8" r="4" fill="#fff"/>
                    <circle cx="8" cy="8" r="3" fill="#4285f4"/>
                </Svg>
            </AppButton>
            <AppButton aria-label="Media Player">
                <Svg w={16} h={14}>
                    <path d="M0 0h15v13H0z" fill="#7fb5d8"/>
                    <path d="M12 1v12M14 1v12" stroke="#c9e2f2"/>
                    <circle cx="7" cy="7" r="5.500" fill="#f28322"/>
                    <path d="M5 4l5 3-5 3z" fill="#fff"/>
                </Svg>
            </AppButton>
            <AppButton $w={36} aria-label="Netflix"><SiNetflix size={12} color="#d8101a"/></AppButton>
            <AppButton><SquareLogo $bg="#10252a" $border="3px solid #2ba8a0">CW</SquareLogo></AppButton>
            <AppButton aria-label="WildTangent">
                <SquareLogo $bg="#1f9df0" $border="3px solid #a5d420">
                    <Svg w={8} h={8}><circle cx="4" cy="4" r="3.500" fill="#123c78"/><path d="M2 4l2 1 2-2" stroke="#9fd8ff"/></Svg>
                </SquareLogo>
            </AppButton>
            <AppButton><SquareLogo $bg="#5fa832">hulu</SquareLogo></AppButton>
            <AppButton $w={30} $open aria-label="Skype">
                <Svg w={17} h={16}>
                    <path d="M8 0c4 0 7 2 8 6-1-1-2-1.500-4-2-4-1-6.500.5-6 2 1 2 8 1 8 5 0 1-.5 2-1 3h-2l-1-4c-2-1-3.500 0-3 2l1 3.500C3 15 0 12 0 7s4-7 8-7z" fill="#16b0ea"/>
                    <path d="M13 15l3-4v4z" fill="#16b0ea"/>
                </Svg>
            </AppButton>
            <AppButton $w={36} $open $active aria-label="Word">
                <Svg w={17} h={16}>
                    <path d="M4 .500h12v14H4z" fill="#e8effa" stroke="#8aa8d8"/>
                    <path d="M5 2h10M13 5h2M13 8h2M7 13h8" stroke="#5f86c8"/>
                    <path d="M0 3l12-1v10H0z" fill="#2f5fb3"/>
                    <path d="M2 5l1.500 5L5.500 6l2 4L9.500 4.500" stroke="#fff" strokeWidth="1.300"/>
                </Svg>
            </AppButton>
        </Apps>
        <Tray>
            <Svg w={10} h={6}><path d="M.5 5.500L5 1l4.500 4.500" stroke="#fff"/></Svg>
            <Svg w={13} h={10}>
                <path d="M3.500 3.500h8v5h-8z" fill="#ddd" stroke="#fff"/>
                <path d="M12.500 5v2M1 1v3h3V1M2.500 4v4" stroke="#fff"/>
            </Svg>
            <Svg w={11} h={11}>
                <path d="M1 8C2 4 5 1 10 1M3 9c1-3 3-5 7-5M5.500 10c.5-2 2-3.500 4.500-3.500" stroke="#aaa"/>
                <circle cx="9" cy="9.500" r="1.200" fill="#fff"/>
            </Svg>
            <Svg w={12} h={10}>
                <path d="M.5 3.500h2l3-3v9l-3-3h-2zM8 3l3 4M11 3L8 7" stroke="#fff"/>
            </Svg>
            <span>ENG</span>
            <Clock>2:27 PM<br/>3/10/2017</Clock>
            <Svg w={20} h={18}>
                <path d="M1 1h12v9H6l-3 3v-3H1z" fill="#fff"/>
                <path d="M3 4h8M3 7h8" stroke="#555"/>
                <circle cx="12" cy="11.500" r="5.500" fill="#4a4a4a" stroke="#ccc"/>
                <text x="12" y="15" fontSize="9" textAnchor="middle" fill="#fff">2</text>
            </Svg>
            <ShowDesktop aria-label="Show desktop"/>
        </Tray>
    </Taskbar>
)

export default function App() {
    return (
        <>
            <GlobalStyle/>
            <Window>
                <TitleArea/>
                <RibbonArea/>
                <DocumentArea/>
                <Status/>
                <TaskbarArea/>
            </Window>
        </>
    )
}
